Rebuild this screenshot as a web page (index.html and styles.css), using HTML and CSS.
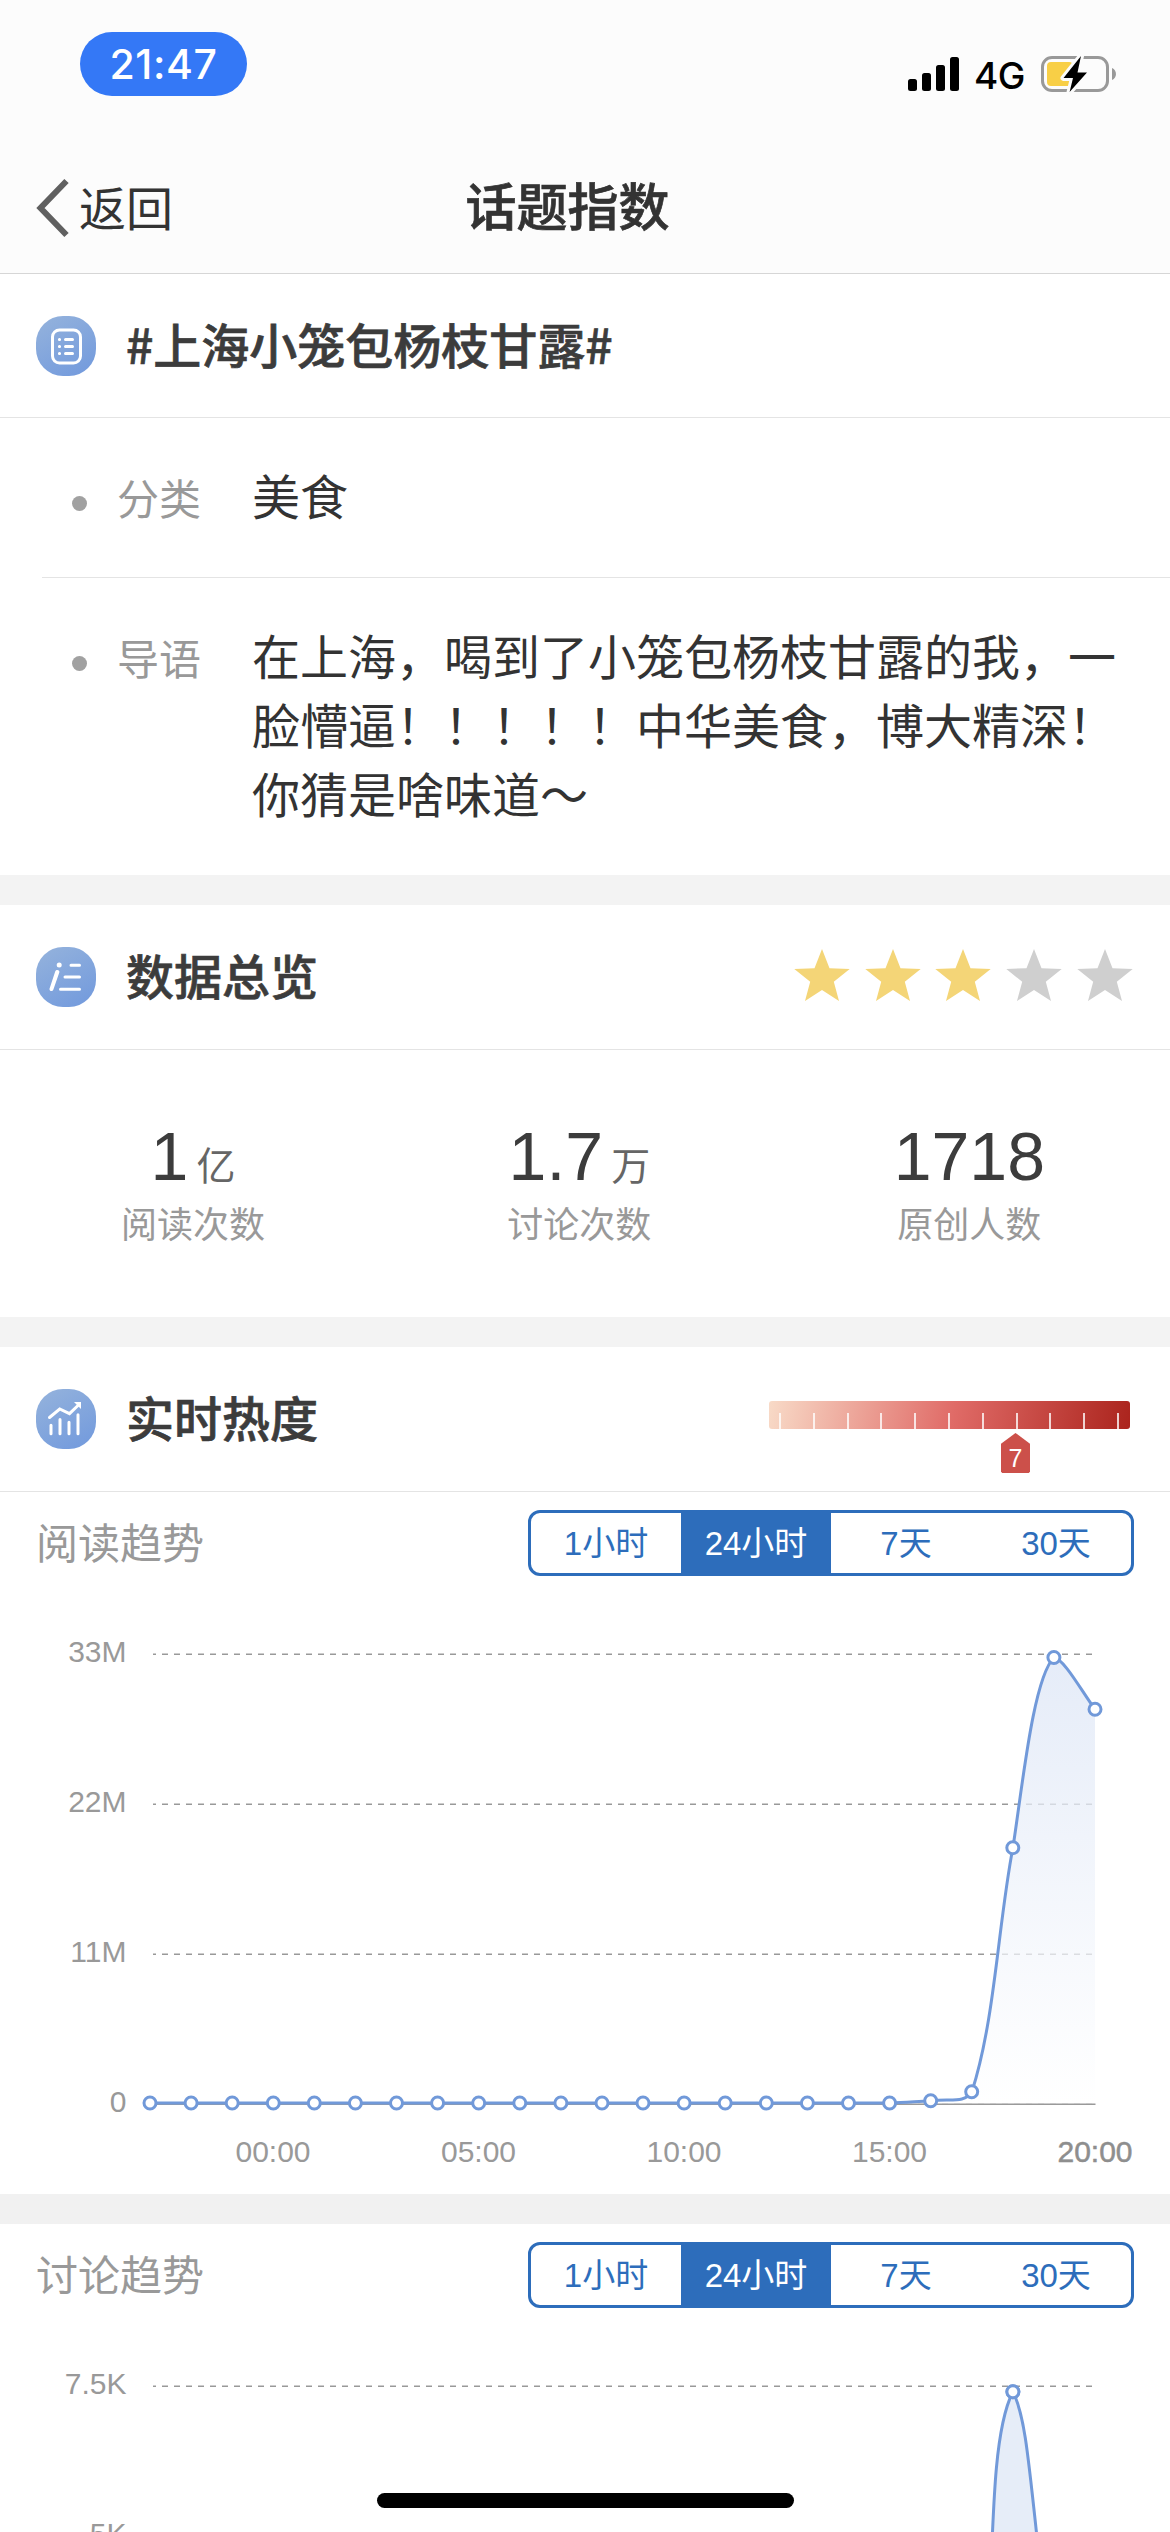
FILE: index.html
```html
<!DOCTYPE html>
<html lang="zh-CN">
<head>
<meta charset="utf-8">
<title>话题指数</title>
<link rel="stylesheet" href="styles.css">
</head>
<body>
<svg class="defs" aria-hidden="true">
  <defs>
    <linearGradient id="area" x1="0" y1="0" x2="0" y2="1">
      <stop offset="0" stop-color="#dde6f6" stop-opacity=".76"/>
      <stop offset="1" stop-color="#ffffff" stop-opacity=".7"/>
    </linearGradient>
    <marker id="dot" markerUnits="userSpaceOnUse" markerWidth="18" markerHeight="18" refX="9" refY="9">
      <circle class="point" cx="9" cy="9" r="6"/>
    </marker>
    <symbol id="star" viewBox="0 0 56 54">
      <path d="M28 1 35.5 20.2 55.7 21 39.8 33.8 45 53 28 42 11 53 16.2 33.8.3 21 20.5 20.2Z"/>
    </symbol>
  </defs>
</svg>

<header class="top">
  <div class="status">
    <span class="time">21:47</span>
    <div class="signals">
      <svg class="bars" width="46" height="36" viewBox="0 0 46 36">
        <rect x="0" y="23" width="9" height="12" rx="2.5"/>
        <rect x="14" y="17" width="9" height="18" rx="2.5"/>
        <rect x="28" y="9" width="9" height="26" rx="2.5"/>
        <rect x="42" y="1" width="9" height="34" rx="2.5"/>
      </svg>
      <span class="network">4G</span>
      <svg width="76" height="40" viewBox="0 0 76 40">
        <rect x="1.5" y="3.5" width="65" height="33" rx="9.5" fill="none" stroke="#999" stroke-width="3"/>
        <path d="M71 14c5.3 2 5.3 10 0 12z" fill="#999"/>
        <rect x="6" y="8" width="26" height="24" rx="4" fill="#f8cf46"/>
        <path d="M40 2 22.5 24H32L28.6 38 46 18.5H36.5Z" fill="#000" stroke="#fcfcfc" stroke-width="6" stroke-linejoin="round" paint-order="stroke"/>
      </svg>
    </div>
  </div>
  <nav class="nav">
    <a class="back">
      <svg width="36" height="60" viewBox="0 0 36 60"><path d="M32.500 3 6.500 30 32.500 57" fill="none" stroke="#606060" stroke-width="6"/></svg>
      <span>返回</span>
    </a>
    <h1>话题指数</h1>
  </nav>
</header>

<section class="topic">
  <div class="head">
    <svg class="icon" viewBox="0 0 60 60">
      <rect x="16.500" y="14" width="28" height="33" rx="7"/>
      <path d="M29.500 23.500H36.500M29.500 30.500H36.500M29.500 37.500H36.500M23.400 23.500h.2M23.400 30.500h.2M23.400 37.500h.2"/>
    </svg>
    <h2>#上海小笼包杨枝甘露#</h2>
  </div>
  <dl class="row kind"><dt>分类</dt><dd>美食</dd></dl>
  <dl class="row intro"><dt>导语</dt><dd>在上海，喝到了小笼包杨枝甘露的我，一<br>脸懵逼！！！！！中华美食，博大精深！<br>你猜是啥味道～</dd></dl>
</section>

<section class="overview">
  <div class="head">
    <svg class="icon" viewBox="0 0 60 60">
      <path d="M35 18.200H43.500M29 30H43.500M24.500 42.200H43.500"/>
      <circle class="solid" cx="23.200" cy="18" r="2.500"/>
      <path class="solid" d="M19.200 24.500c1-2.400 5-1.500 4.100 1L17.300 42.800c-.8 2.200-4.200 1.400-3.800-1Z"/>
    </svg>
    <h2>数据总览</h2>
    <div class="stars">
      <svg><use href="#star"/></svg>
      <svg><use href="#star"/></svg>
      <svg><use href="#star"/></svg>
      <svg class="off"><use href="#star"/></svg>
      <svg class="off"><use href="#star"/></svg>
    </div>
  </div>
  <div class="stats">
    <div class="stat"><p class="num">1<small>亿</small></p><p class="cap">阅读次数</p></div>
    <div class="stat"><p class="num">1.7<small>万</small></p><p class="cap">讨论次数</p></div>
    <div class="stat"><p class="num">1718</p><p class="cap">原创人数</p></div>
  </div>
</section>

<section class="reads">
  <div class="head">
    <svg class="icon" viewBox="0 0 60 60">
      <path d="M15 36.200V44.800M24 30.500V44.800M33 33.200V44.800M42 25.700V44.800"/>
      <path d="M13.500 28.500 23.700 20 33.500 24.700 42.500 16"/>
      <path class="solid" d="M38 13H45V20Z"/>
    </svg>
    <h2>实时热度</h2>
    <div class="heat">
      <div class="scale"><i></i><i></i><i></i><i></i><i></i><i></i><i></i><i></i><i></i><i></i><i></i></div>
      <span class="level">7</span>
    </div>
  </div>
  <div class="trend">
    <h3>阅读趋势</h3>
    <div class="tabs"><span>1小时</span><span class="on">24小时</span><span>7天</span><span>30天</span></div>
  </div>
  <svg class="chart" width="1170" height="618" viewBox="0 0 1170 618">
    <path class="grid" d="M153 78.300H1095M153 228.300H1095M153 378.300H1095M153 528.300H1095"/>
    <path fill="url(#area)" d="M150 527H889.600C905 527 915 525.500 930.500 524.800C950 522 964 528 971.900 515.700C995 444 998 349 1012.900 271.700C1022 214 1033 102 1054 81.500C1064 83 1081 114 1095 133.300V528H150Z"/>
    <path class="axis" d="M150 528.300H1095.500"/>
    <path class="line" d="M150 527H889.600C905 527 915 525.500 930.500 524.800C950 522 964 528 971.900 515.700C995 444 998 349 1012.900 271.700C1022 214 1033 102 1054 81.500C1064 83 1081 114 1095 133.300"/>
    <polyline class="points" points="150,527 191.100,527 232.200,527 273.300,527 314.300,527 355.400,527 396.500,527 437.600,527 478.700,527 519.800,527 560.900,527 602,527 643,527 684.100,527 725.200,527 766.300,527 807.400,527 848.500,527 889.600,527 930.700,524.800 971.700,515.700 1012.800,271.700 1053.900,81.500 1095,133.300"/>
    <g class="ylabels"><text x="126.500" y="86">33M</text><text x="126.500" y="236">22M</text><text x="126.500" y="386">11M</text><text x="126.500" y="536">0</text></g>
    <g class="xlabels"><text x="273" y="586">00:00</text><text x="478.500" y="586">05:00</text><text x="684" y="586">10:00</text><text x="889.500" y="586">15:00</text><text x="1095" y="586" class="now">20:00</text></g>
  </svg>
</section>

<section class="talks">
  <div class="trend">
    <h3>讨论趋势</h3>
    <div class="tabs"><span>1小时</span><span class="on">24小时</span><span>7天</span><span>30天</span></div>
  </div>
  <svg class="chart" width="1170" height="224" viewBox="0 0 1170 224">
    <path class="grid" d="M153 78.300H1095"/>
    <path fill="#e6edf8" d="M989.500 302C993.500 182 996 117 1012.900 83.700C1027 112 1029 162 1045 302Z"/>
    <path class="line" d="M989.500 302C993.500 182 996 117 1012.900 83.700C1027 112 1029 162 1045 302"/>
    <polyline class="points" points="1012.900,83.700 1012.900,83.700"/>
    <g class="ylabels"><text x="126.500" y="86">7.5K</text><text x="126.500" y="236">5K</text></g>
  </svg>
</section>
<div class="home"></div>
</body>
</html>
```
FILE: styles.css
```css
* { box-sizing: border-box; margin: 0; padding: 0; }

body {
  width: 1170px;
  height: 2532px;
  overflow: hidden;
  background: #fff;
  color: #333;
  font-family: "Noto Sans CJK SC", sans-serif;
  text-spacing-trim: space-all;
}

.defs { position: absolute; width: 0; height: 0; }

.top {
  height: 274px;
  background: #fcfcfc;
  border-bottom: 1px solid #d6d6d6;
}

.status {
  height: 148px;
  padding: 32px 53px 0 80px;
  display: flex;
  justify-content: space-between;
  align-items: flex-start;
  font-family: Inter, sans-serif;
}

.time {
  width: 167px;
  height: 64px;
  border-radius: 32px;
  background: #3478f6;
  color: #fff;
  font-size: 41px;
  font-weight: 500;
  letter-spacing: 0.6px;
  line-height: 64px;
  text-align: center;
}

.signals { display: flex; align-items: center; padding-top: 18px; color: #000; }
.bars { overflow: visible; margin-right: 20px; }
.network { font-size: 37px; font-weight: 500; line-height: 44px; width: 67px; letter-spacing: -0.5px; padding-top: 4px; }

.nav {
  display: grid;
  grid-template-columns: 1fr auto 1fr;
  align-items: center;
  height: 120px;
}
.nav h1 {
  grid-column: 2;
  margin: -9px 0 0 -35px;
  font-size: 51px;
  font-weight: 500;
  line-height: 74px;
  -webkit-text-stroke: 0.7px #333;
}
.back { display: flex; align-items: center; padding-left: 34px; font-size: 47px; line-height: 60px; }
.back span { margin: -5px 0 0 9px; }

.head {
  height: 144px;
  padding: 0 40px 0 36px;
  display: flex;
  align-items: center;
  border-bottom: 1px solid #e4e4e4;
}
.overview .head, .reads .head { height: 145px; }

.icon {
  width: 60px;
  height: 60px;
  margin-right: 30px;
  border-radius: 27px;
  background: linear-gradient(150deg, #95b3dc, #7199dd);
  fill: none;
  stroke: #fff;
  stroke-width: 3;
  stroke-linecap: round;
}
.icon .solid { fill: #fff; stroke: none; }

h2 {
  margin-top: -6px;
  font-size: 48px;
  font-weight: 500;
  line-height: 70px;
  color: #3c3c3c;
  -webkit-text-stroke: 0.7px #3c3c3c;
}

.row { display: flex; font-size: 48px; }
.row dt {
  display: flex;
  align-items: center;
  width: 180px;
  height: 73px;
  font-size: 42px;
  color: #999;
}
.row dt::before {
  content: "";
  width: 15px;
  height: 15px;
  margin: 14px 30px 0 0;
  border-radius: 50%;
  background: #a1a1a1;
}
.row dd { line-height: 69px; }
.kind { height: 160px; margin-left: 42px; padding: 42px 0 0 30px; border-bottom: 1px solid #e4e4e4; }
.intro { height: 297px; padding: 42px 0 0 72px; }

.overview, .reads, .talks { border-top: 30px solid #f3f3f3; }
.talks { border-top-color: #f1f1f1; }

.stars { display: flex; gap: 14.8px; margin: -4px -3px 0 auto; }
.stars svg { width: 56px; height: 54px; fill: #f4d577; }
.stars .off { fill: #cfcfcf; }

.stats {
  height: 267px;
  padding: 66px 125px 0 121px;
  display: flex;
  justify-content: space-between;
  text-align: center;
}
.num { font: 68px/80px "Liberation Sans", "Noto Sans CJK SC", sans-serif; color: #3c3c3c; height: 79px; }
.num small { font-size: 39px; margin-left: 8px; color: #666; }
.cap { font-size: 36px; line-height: 54px; color: #999; }

.heat { width: 361px; height: 72px; margin: 36px 0 0 auto; position: relative; }
.scale {
  height: 28px;
  padding: 0 11px 0 10px;
  display: flex;
  justify-content: space-between;
  align-items: flex-end;
  border-radius: 3px;
  background: linear-gradient(100deg, #f8dac7, #e06b67 51%, #ab241d);
}
.scale i { width: 2px; height: 16px; background: rgba(255, 255, 255, .78); }
.level {
  position: absolute;
  left: 232px;
  top: 32px;
  width: 29px;
  height: 40px;
  padding-top: 11px;
  clip-path: polygon(50% 0, 100% 27%, 100% 96%, 96% 100%, 4% 100%, 0 96%, 0 27%);
  background: #cc504a;
  color: #fff;
  font: 25px/28px "Liberation Sans", sans-serif;
  text-align: center;
}

.trend { display: flex; justify-content: space-between; align-items: center; padding: 18px 36px 0; }
.trend h3 { font-size: 42px; font-weight: 400; line-height: 60px; color: #999; margin-top: -4px; }
.tabs {
  width: 606px;
  height: 66px;
  display: flex;
  border: 3px solid #2d6dbb;
  border-radius: 12px;
  color: #2d6dbb;
  font: 33px/62px "Liberation Sans", "Noto Sans CJK SC", sans-serif;
  text-align: center;
}
.tabs span { flex: 1; height: 60px; }
.tabs .on { background: #2d6dbb; color: #fff; }

.chart { display: block; font-family: "Liberation Sans", sans-serif; font-size: 30px; }
.chart text { fill: #999; }
.chart .now { fill: #8e8e8e; stroke: #8e8e8e; stroke-width: .5; }
.grid { fill: none; stroke: #999; stroke-width: 1.5; stroke-dasharray: 6 6; stroke-dashoffset: 3; }
.axis { stroke: #9a9a9a; stroke-width: 1.5; }
.line { fill: none; stroke: #7199d9; stroke-width: 3; }
.points { fill: none; marker-start: url(#dot); marker-mid: url(#dot); marker-end: url(#dot); }
.point { fill: #fff; stroke: #7199d9; stroke-width: 3; }
.ylabels { text-anchor: end; }
.xlabels { text-anchor: middle; }

.home {
  position: absolute;
  left: 377px;
  top: 2493px;
  width: 417px;
  height: 15px;
  border-radius: 8px;
  background: #000;
}
```
